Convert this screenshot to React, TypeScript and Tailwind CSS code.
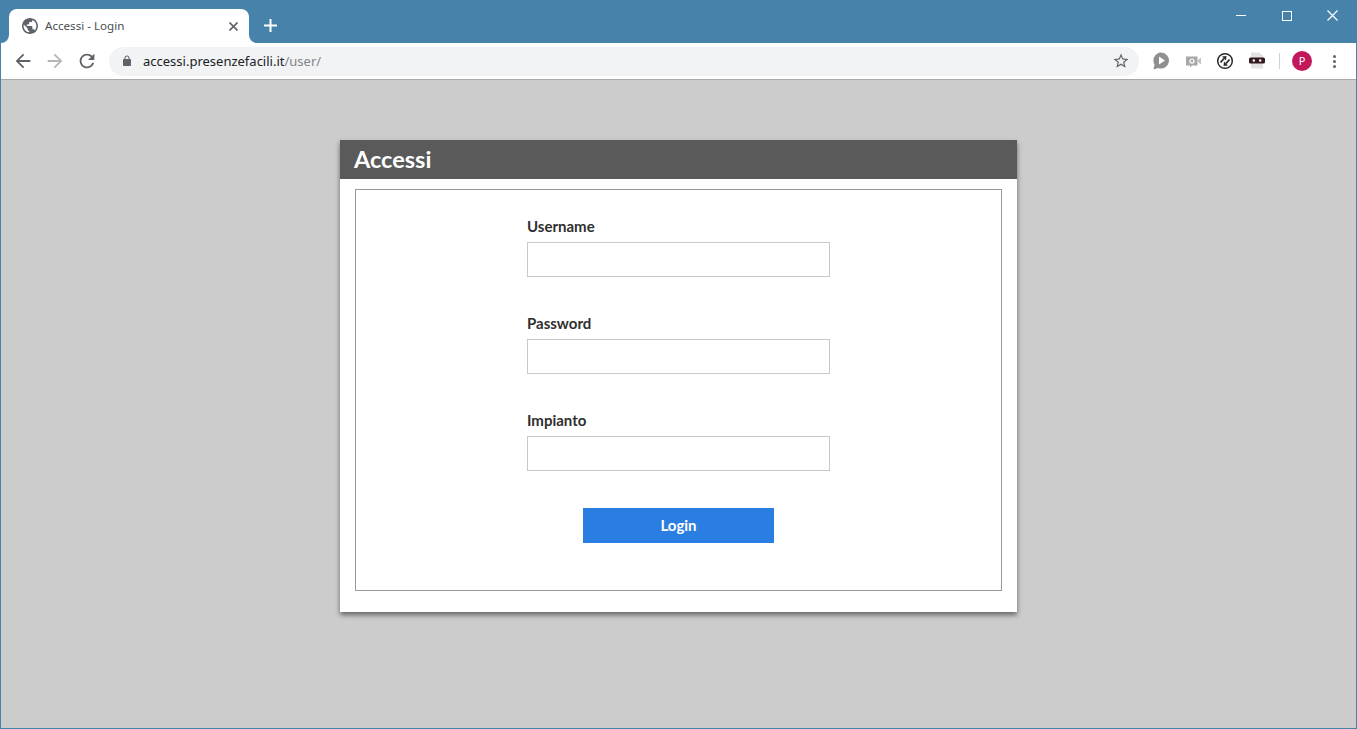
import React from 'react';

const Field = ({ label, type = 'text' }: { label: string; type?: string }) => (
  <div className="w-[303px] mb-[34px]">
    <label className="block h-[28px] leading-[25px] text-[15px] font-bold text-[#2f2f2f]">{label}</label>
    <input type={type} className="block w-full h-[35px] border border-[#c8c8c8] bg-white outline-none" />
  </div>
);

const Glyph = ({ d, size, className }: { d: string; size: number; className: string }) => (
  <svg width={size} height={size} viewBox="0 0 24 24" fill="currentColor" className={className}>
    <path d={d} />
  </svg>
);

const Extensions = () => (
  <div className="flex items-center">
    <svg width="32" height="20" viewBox="0 0 32 20">
      <path d="M16 1.500a8 8 0 1 1-2.800 15.500L8.500 18.500l1-5A8 8 0 0 1 16 1.500z" fill="#8f8f8f" />
      <path d="M14 5.500l6 4-6 4z" fill="#fff" />
    </svg>
    <svg width="32" height="20" viewBox="0 0 32 20">
      <path d="M9 5.500h11.500v9H15l-2 2v-2H9z" fill="#a8a8a8" />
      <path d="M21 9l3-2.500v7L21 11z" fill="#c4c4c4" />
      <circle cx="15" cy="10" r="2" fill="none" stroke="#fff" strokeWidth="1.200" />
    </svg>
    <svg width="32" height="20" viewBox="0 0 32 20">
      <circle cx="16" cy="10" r="7.300" fill="none" stroke="#2b2b2b" strokeWidth="1.500" />
      <path d="M11.500 11.500l3.500-4" fill="none" stroke="#2b2b2b" strokeWidth="1.800" />
      <path d="M20.500 8.500l-3.500 4" fill="none" stroke="#2b2b2b" strokeWidth="1.800" />
      <path d="M13 5.500l4.500-.500-.5 4.500zM19 14.500l-4.500.500.5-4.500z" fill="#2b2b2b" />
    </svg>
    <svg width="32" height="20" viewBox="0 0 32 20">
      <path d="M10 1.500h8l4 3.500v12.500H10z" fill="#e2e2e2" />
      <rect x="8" y="6.500" width="16" height="6" rx="1.500" fill="#33191c" />
      <circle cx="12.800" cy="9.500" r="1.200" fill="#fff" />
      <circle cx="19.200" cy="9.500" r="1.200" fill="#fff" />
    </svg>
  </div>
);

const App = () => {
  return (
    <div className="h-screen w-screen flex flex-col border border-[#4682a9] bg-[#cccccc] overflow-hidden font-['Lato',sans-serif]">
      {/* window title bar */}
      <div className="h-[42px] shrink-0 bg-[#4682a9] flex items-end pl-[8px]">
        <div className="relative w-[240px] h-[34px] bg-white rounded-t-[8px] flex items-center pl-[13px] pr-[11px]">
          <svg className="absolute -left-[8px] bottom-0" width="8" height="8" viewBox="0 0 8 8">
            <path d="M8 0v8H0a8 8 0 0 0 8-8z" fill="#fff" />
          </svg>
          <svg className="absolute -right-[8px] bottom-0" width="8" height="8" viewBox="0 0 8 8">
            <path d="M0 0v8h8a8 8 0 0 1-8-8z" fill="#fff" />
          </svg>
          <svg width="16" height="16" viewBox="2 2 20 20" fill="#5f6368">
            <path d="M12 2C6.480 2 2 6.480 2 12s4.480 10 10 10 10-4.480 10-10S17.520 2 12 2zm-1 17.930c-3.950-.490-7-3.850-7-7.930 0-.620.080-1.210.210-1.790L9 15v1c0 1.100.900 2 2 2v1.930zm6.900-2.540c-.260-.810-1-1.390-1.900-1.390h-1v-3c0-.550-.450-1-1-1H8v-2h2c.550 0 1-.450 1-1V7h2c1.100 0 2-.900 2-2v-.410c2.930 1.190 5 4.060 5 7.410 0 2.080-.800 3.970-2.100 5.390z" />
          </svg>
          <span className="ml-[7px] flex-1 text-[11.600px] text-[#4a4d50] font-['Noto_Sans',sans-serif]">Accessi - Login</span>
          <svg width="9" height="9" viewBox="0 0 9 9" className="text-[#5f6368]">
            <path d="M.5.500l8 8M8.500.500l-8 8" stroke="currentColor" strokeWidth="1.600" fill="none" />
          </svg>
        </div>
        <svg width="13" height="13" viewBox="0 0 13 13" className="text-white ml-[15px] mb-[11px]">
          <path d="M6.500 0v13M0 6.500h13" stroke="currentColor" strokeWidth="2" fill="none" />
        </svg>
        <div className="flex-1" />
        <div className="self-start flex items-center text-white h-[29px]">
          <div className="w-[10px] h-px bg-white" />
          <div className="w-[10px] h-[10px] border border-white ml-[36px]" />
          <svg width="11" height="11" viewBox="0 0 11 11" className="ml-[35px] mr-[18px]">
            <path d="M.5.500l10 10M10.500.500l-10 10" stroke="currentColor" strokeWidth="1.200" fill="none" />
          </svg>
        </div>
      </div>

      {/* browser toolbar */}
      <div className="h-[37px] shrink-0 bg-white border-b border-[#a9a9a9] flex items-center">
        <div className="w-[108px] shrink-0 flex items-center pl-[11px]">
          <Glyph size={22} className="text-[#5f6368]" d="M20 11H7.830l5.590-5.590L12 4l-8 8 8 8 1.410-1.410L7.830 13H20v-2z" />
          <Glyph size={22} className="text-[#b4b6b8] ml-[10px]" d="M4 11h12.170l-5.590-5.590L12 4l8 8-8 8-1.410-1.410L16.170 13H4v-2z" />
          <Glyph size={22} className="text-[#5f6368] ml-[10px]" d="M17.650 6.350C16.200 4.900 14.210 4 12 4c-4.420 0-7.990 3.580-7.990 8s3.570 8 7.990 8c3.730 0 6.840-2.550 7.730-6h-2.080c-.820 2.330-3.040 4-5.650 4-3.310 0-6-2.690-6-6s2.690-6 6-6c1.660 0 3.140.690 4.220 1.780L13 11h7V4l-2.350 2.350z" />
        </div>
        <div className="flex-1 h-[29px] rounded-full bg-[#f1f3f4] flex items-center pl-[12px] pr-[9px]">
          <Glyph size={12} className="text-[#5f6368]" d="M18 8h-1V6c0-2.760-2.240-5-5-5S7 3.240 7 6v2H6c-1.100 0-2 .900-2 2v10c0 1.100.900 2 2 2h12c1.100 0 2-.900 2-2V10c0-1.100-.900-2-2-2zM9 6c0-1.660 1.340-3 3-3s3 1.340 3 3v2H9V6z" />
          <span className="ml-[10px] pt-[1px] flex-1 text-[13px] text-[#202124] font-['Noto_Sans',sans-serif]">
            accessi.presenzefacili.it<span className="text-[#80868b]">/user/</span>
          </span>
          <Glyph size={18} className="text-[#5f6368]" d="M22 9.240l-7.190-.620L12 2 9.190 8.630 2 9.240l5.460 4.730L5.820 21 12 17.270 18.180 21l-1.630-7.030L22 9.240zM12 15.400l-3.760 2.270 1-4.280-3.320-2.880 4.380-.380L12 6.100l1.710 4.040 4.380.380-3.320 2.880 1 4.280L12 15.400z" />
        </div>
        <div className="ml-[6px] flex items-center">
          <Extensions />
          <div className="w-px h-[16px] bg-[#d0d0d0] ml-[6px]" />
          <div className="ml-[12px] w-[20px] h-[20px] rounded-full bg-[#c2185b] text-white text-[11px] flex items-center justify-center font-['Noto_Sans',sans-serif]">P</div>
          <div className="ml-[21px] mr-[20px] flex flex-col gap-[2px]">
            <div className="w-[3px] h-[3px] rounded-full bg-[#5f6368]" />
            <div className="w-[3px] h-[3px] rounded-full bg-[#5f6368]" />
            <div className="w-[3px] h-[3px] rounded-full bg-[#5f6368]" />
          </div>
        </div>
      </div>

      {/* page */}
      <main className="flex-1 pt-[60px]">
        <div className="w-[677px] ml-[339px] bg-white shadow-[0_3px_5px_rgba(0,0,0,0.5)]">
          <h1 className="h-[39px] bg-[#5a5a5a] px-[14px] text-[23.500px] leading-[39px] font-bold text-white">Accessi</h1>
          <div className="px-[15px] pt-[10px] pb-[21px]">
            <div className="h-[402px] border border-[#999999] flex flex-col items-center pt-[24px]">
              <Field label="Username" />
              <Field label="Password" type="password" />
              <Field label="Impianto" />
              <button className="w-[191px] h-[35px] mt-[3px] bg-[#2a7de1] text-white text-[15px] font-bold">Login</button>
            </div>
          </div>
        </div>
      </main>
    </div>
  );
};

export default App;
